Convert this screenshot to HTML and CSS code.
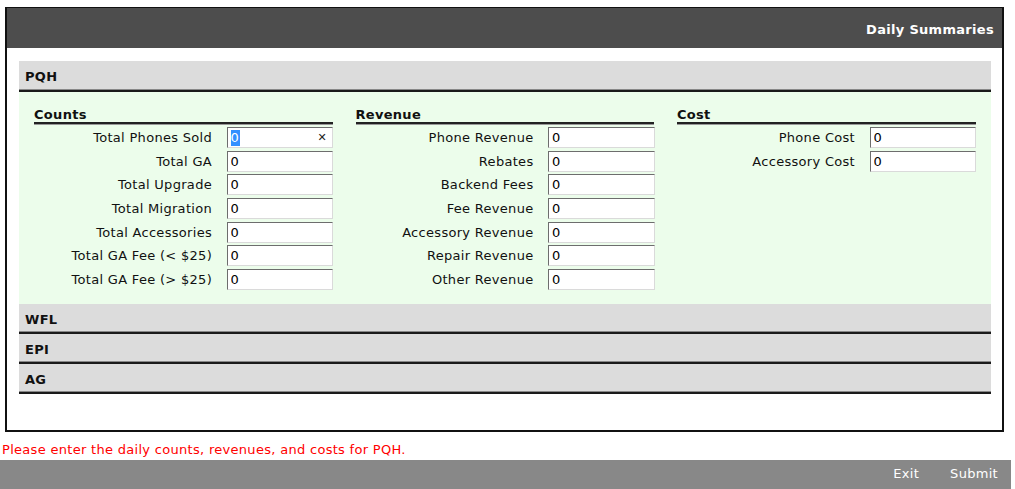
FILE: index.html
```html
<!DOCTYPE html>
<html>
<head>
<meta charset="utf-8">
<link rel="stylesheet" href="styles.css">
</head>
<body>
<div class="panel">
  <div class="panel-head">Daily Summaries</div>
  <div class="panel-body">
    <div class="section">
      <div class="section-bar">PQH</div>
      <div class="section-content">
        <div class="col">
          <div class="col-title">Counts</div>
          <div class="rows">
            <label>Total Phones Sold</label><div class="field focused"><span class="sel">0</span><span class="clear">✕</span></div>
            <label>Total GA</label><input class="field" value="0">
            <label>Total Upgrade</label><input class="field" value="0">
            <label>Total Migration</label><input class="field" value="0">
            <label>Total Accessories</label><input class="field" value="0">
            <label>Total GA Fee (&lt; $25)</label><input class="field" value="0">
            <label>Total GA Fee (&gt; $25)</label><input class="field" value="0">
          </div>
        </div>
        <div class="col">
          <div class="col-title">Revenue</div>
          <div class="rows">
            <label>Phone Revenue</label><input class="field" value="0">
            <label>Rebates</label><input class="field" value="0">
            <label>Backend Fees</label><input class="field" value="0">
            <label>Fee Revenue</label><input class="field" value="0">
            <label>Accessory Revenue</label><input class="field" value="0">
            <label>Repair Revenue</label><input class="field" value="0">
            <label>Other Revenue</label><input class="field" value="0">
          </div>
        </div>
        <div class="col">
          <div class="col-title">Cost</div>
          <div class="rows">
            <label>Phone Cost</label><input class="field" value="0">
            <label>Accessory Cost</label><input class="field" value="0">
          </div>
        </div>
      </div>
    </div>
    <div class="section"><div class="section-bar">WFL</div></div>
    <div class="section"><div class="section-bar">EPI</div></div>
    <div class="section"><div class="section-bar">AG</div></div>
  </div>
</div>
<div class="message">Please enter the daily counts, revenues, and costs for PQH.</div>
<div class="footer">
  <span class="footer-btn">Exit</span>
  <span class="footer-btn">Submit</span>
</div>
</body>
</html>
```

FILE: styles.css
```css
html, body {
  margin: 0;
  padding: 0;
  background: #ffffff;
  font-family: "DejaVu Sans", Verdana, sans-serif;
  font-size: 13px;
  letter-spacing: 0.3px;
  color: #111;
  overflow: hidden;
}

.panel {
  margin: 7px 11px 0 5px;
  border: 1px solid #111;
  border-right-width: 2px;
  border-bottom-width: 2px;
  border-left-width: 2px;
  box-sizing: border-box;
  height: 425px;
}

.panel-head {
  height: 40px;
  background: #4d4d4d;
  color: #fff;
  font-weight: bold;
  display: flex;
  align-items: center;
  justify-content: flex-end;
  padding-right: 8px;
  padding-top: 2px;
  box-sizing: border-box;
}

.panel-body {
  padding: 13px 11px 0 12px;
}

.section-bar {
  height: 26px;
  background: #dcdcdc;
  border-bottom: 2px solid #1a1a1a;
  box-shadow: inset 0 -1px 0 #888;
  font-weight: bold;
  padding-left: 6px;
  display: flex;
  align-items: center;
  padding-top: 2px;
  box-sizing: content-box;
}

.section:first-child .section-bar {
  height: 27px;
}

.section-content {
  background: #ecfdeb;
  display: flex;
  gap: 23px;
  padding: 16px 16px 13px 15px;
  height: 183px;
}

.col {
  width: 298.5px;
  flex: 0 0 298.5px;
}

.col-title {
  font-weight: bold;
  border-bottom: 2px solid #222;
  box-shadow: 0 1px 0 #999;
  line-height: 14px;
  padding-bottom: 0;
  margin-bottom: 3px;
}

.rows {
  display: grid;
  grid-template-columns: 178px 106.5px;
  column-gap: 14.5px;
  row-gap: 2.67px;
  align-items: center;
}

.rows label {
  text-align: right;
  white-space: nowrap;
}

.field {
  box-sizing: border-box;
  width: 106.5px;
  height: 21px;
  margin: 0;
  border: 1px solid;
  border-color: #6d6d6d #dadada #dadada #6d6d6d;
  background: #fff;
  font-family: "DejaVu Sans", Verdana, sans-serif;
  font-size: 13px;
  letter-spacing: 0.3px;
  color: #000;
  padding: 0 0 0 3px;
  outline: none;
}

.focused {
  display: flex;
  align-items: center;
  justify-content: space-between;
  padding-right: 5px;
  padding-left: 3px;
}

.sel {
  background: #3390ff;
  color: #fff;
  line-height: 16px;
  padding: 0 1px 0 0;
}

.clear {
  font-size: 11px;
  font-weight: bold;
  color: #222;
}

.message {
  color: #f00;
  padding: 10px 0 0 2px;
  line-height: 15px;
  height: 18px;
}

.footer {
  background: #888888;
  height: 40px;
  margin-right: 4px;
  display: flex;
  justify-content: flex-end;
  align-items: flex-start;
  gap: 31px;
  padding: 6px 13px 0 0;
  box-sizing: border-box;
  color: #fff;
}
```
